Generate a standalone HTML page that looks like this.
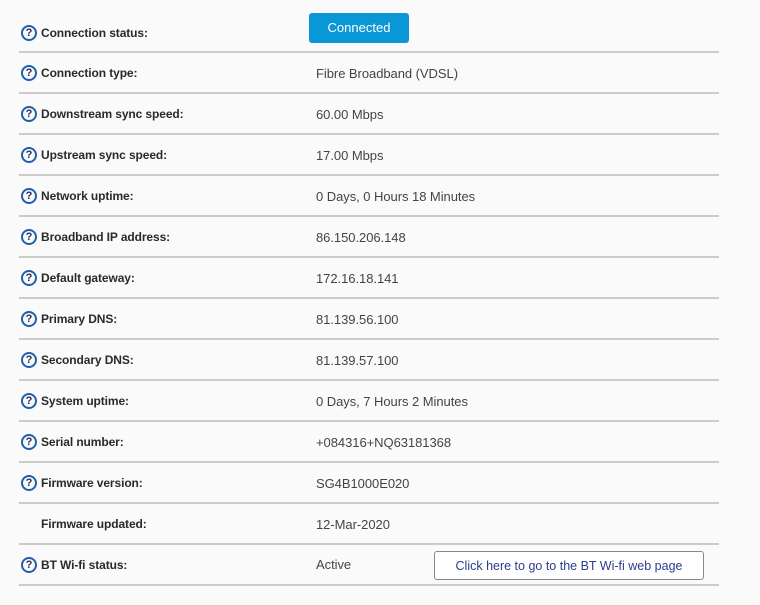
<!DOCTYPE html>
<html><head><style>
body{margin:0;background:#fafafa;font-family:"Liberation Sans",sans-serif;width:760px;height:605px;position:relative;overflow:hidden}
.row{position:absolute;left:19px;width:700px;height:41px;border-bottom:2px solid #cbcbcb;box-sizing:border-box}
.ic{position:absolute;left:2px;width:12px;height:12px;border:2px solid #1f5fae;border-radius:50%;color:#2b2b5a;font:bold 11px/12px "Liberation Sans",sans-serif;text-align:center;margin-top:1px}
.lb{position:absolute;left:22px;font-weight:bold;font-size:12px;color:#2a2a2a;letter-spacing:-0.1px;margin-top:1px}
.v{position:absolute;left:297px;font-size:13px;color:#444;letter-spacing:-0.05px;margin-top:1px}
.btn{position:absolute;left:290px;width:100px;height:30px;background:#0a97d6;border-radius:3px;color:#fff;font-size:13px;text-align:center;line-height:30px}
.btn2{position:absolute;left:415px;width:268px;height:27px;border:1px solid #888;border-radius:3px;background:#fff;color:#2d3d8c;font-size:12.5px;text-align:center;line-height:28px}
</style></head><body>
<div class="row" style="top:12px"><div class="ic" style="top:12px">?</div><div class="lb" style="top:13px">Connection status:</div><div class="btn" style="top:1px">Connected</div></div>
<div class="row" style="top:53px"><div class="ic" style="top:11px">?</div><div class="lb" style="top:12px">Connection type:</div><div class="v" style="top:12px">Fibre Broadband (VDSL)</div></div>
<div class="row" style="top:94px"><div class="ic" style="top:11px">?</div><div class="lb" style="top:12px">Downstream sync speed:</div><div class="v" style="top:12px">60.00 Mbps</div></div>
<div class="row" style="top:135px"><div class="ic" style="top:11px">?</div><div class="lb" style="top:12px">Upstream sync speed:</div><div class="v" style="top:12px">17.00 Mbps</div></div>
<div class="row" style="top:176px"><div class="ic" style="top:11px">?</div><div class="lb" style="top:12px">Network uptime:</div><div class="v" style="top:12px">0 Days, 0 Hours 18 Minutes</div></div>
<div class="row" style="top:217px"><div class="ic" style="top:11px">?</div><div class="lb" style="top:12px">Broadband IP address:</div><div class="v" style="top:12px">86.150.206.148</div></div>
<div class="row" style="top:258px"><div class="ic" style="top:11px">?</div><div class="lb" style="top:12px">Default gateway:</div><div class="v" style="top:12px">172.16.18.141</div></div>
<div class="row" style="top:299px"><div class="ic" style="top:11px">?</div><div class="lb" style="top:12px">Primary DNS:</div><div class="v" style="top:12px">81.139.56.100</div></div>
<div class="row" style="top:340px"><div class="ic" style="top:11px">?</div><div class="lb" style="top:12px">Secondary DNS:</div><div class="v" style="top:12px">81.139.57.100</div></div>
<div class="row" style="top:381px"><div class="ic" style="top:11px">?</div><div class="lb" style="top:12px">System uptime:</div><div class="v" style="top:12px">0 Days, 7 Hours 2 Minutes</div></div>
<div class="row" style="top:422px"><div class="ic" style="top:11px">?</div><div class="lb" style="top:12px">Serial number:</div><div class="v" style="top:12px">+084316+NQ63181368</div></div>
<div class="row" style="top:463px"><div class="ic" style="top:11px">?</div><div class="lb" style="top:12px">Firmware version:</div><div class="v" style="top:12px">SG4B1000E020</div></div>
<div class="row" style="top:504px"><div class="lb" style="top:12px">Firmware updated:</div><div class="v" style="top:12px">12-Mar-2020</div></div>
<div class="row" style="top:545px"><div class="ic" style="top:11px">?</div><div class="lb" style="top:12px">BT Wi-fi status:</div><div class="v" style="top:11px">Active</div><div class="btn2" style="top:6px">Click here to go to the BT Wi-fi web page</div></div>
</body></html>
